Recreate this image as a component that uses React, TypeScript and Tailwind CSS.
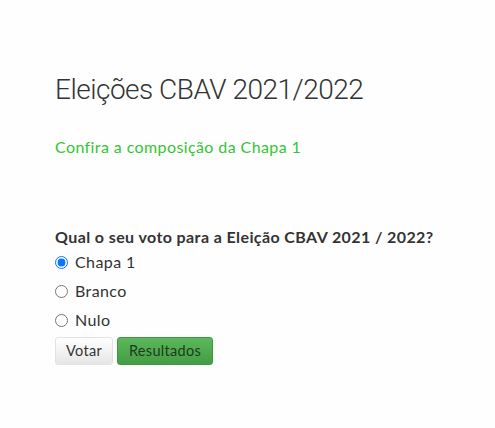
import React from "react";

export default function App() {
  return (
    <div className="min-h-[428px] bg-[#fefefe] px-[55px] pt-[70px]">
      <h1 className="font-['Roboto',sans-serif] font-light text-[28px] leading-[40px] tracking-[-0.5px] text-[#333]">
        Eleições CBAV 2021/2022
      </h1>
      <a className="mt-[26px] block font-['Lato',sans-serif] text-[16px] leading-[22px] tracking-[0.4px] text-[#33c633]">
        Confira a composição da Chapa 1
      </a>
      <form className="mt-[68px] font-['Lato',sans-serif] tracking-[0.4px] text-[#333]">
        <p className="text-[16px] leading-[22px] font-bold">Qual o seu voto para a Eleição CBAV 2021 / 2022?</p>
        <div className="flex flex-col">
          {["Chapa 1", "Branco", "Nulo"].map((o, i) => (
            <label key={o} className="flex h-[29px] items-center gap-[7px] text-[16px] leading-[20px]">
              <input type="radio" name="v" defaultChecked={i === 0} className="m-0 h-[13px] w-[13px] accent-[#0a75ff]" />
              <span className="-mt-[2px]">{o}</span>
            </label>
          ))}
        </div>
        <div className="mt-[2px] flex gap-[4px]">
          <button type="button" className="h-[28px] w-[58px] rounded-[3px] border border-[#e2e2e2] bg-gradient-to-b from-white to-[#e6e6e6] font-['Lato',sans-serif] text-[14.5px] tracking-[0.3px] text-[#333]">
            Votar
          </button>
          <button type="button" className="h-[28px] w-[96px] rounded-[3px] border border-[#3e9a3e] bg-gradient-to-b from-[#5cb85c] to-[#449d44] font-['Lato',sans-serif] text-[14.5px] tracking-[0.3px] text-[#1e3a1e]">
            Resultados
          </button>
        </div>
      </form>
    </div>
  );
}
